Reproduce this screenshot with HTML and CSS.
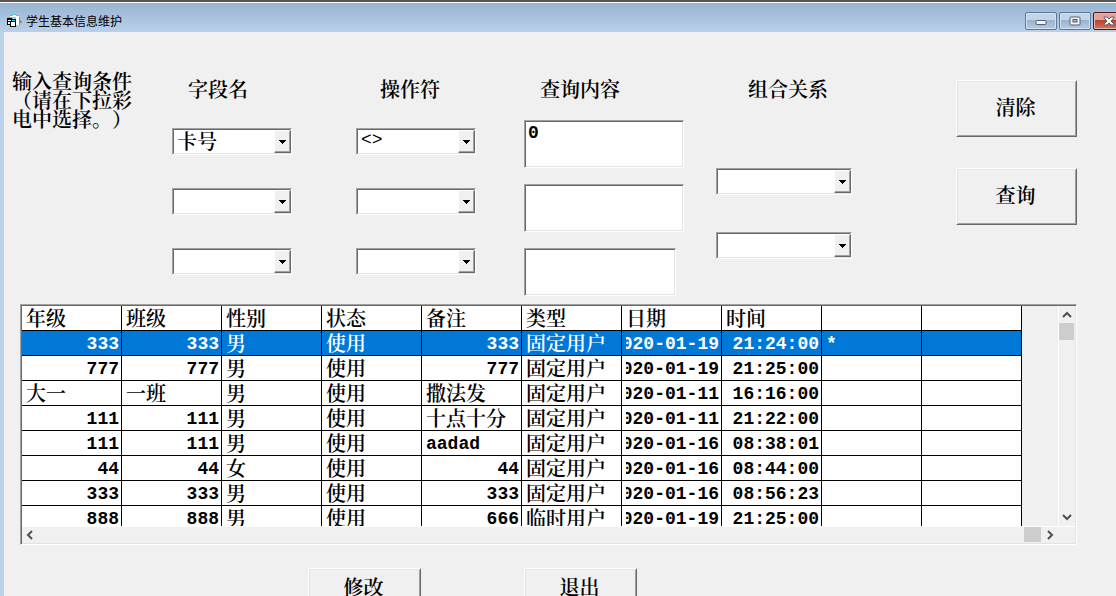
FILE: index.html
```html
<!DOCTYPE html>
<html lang="zh-CN">
<head>
<meta charset="utf-8">
<title>学生基本信息维护</title>
<link rel="stylesheet" href="styles.css">
</head>
<body>
<div class="window">
  <header class="titlebar">
    <svg class="app-icon" width="16" height="14" viewBox="0 0 16 14" aria-hidden="true" shape-rendering="crispEdges">
      <path d="M3 1h6v1h3v1h1v8H9V3H3z" fill="#fff"/>
      <path d="M3 1h3v-1h3v1h3v1H9V1H6v1H3zM1 3h4v1H1z" fill="#0fe5ee"/>
      <path d="M12 3h1v8h-1zM13 6h1v3h-1zM14 7h1v2h-1z" fill="#8b8f94"/>
      <path d="M0 4h5v1h4v8H3v-2H0z" fill="#000"/>
      <path d="M1 6h3v1H1zM1 8h2v2H1zM4 8h4v4H4z" fill="#fff"/>
      <path d="M5 6h3v1H5z" fill="#0fe5ee"/>
    </svg>
    <h1 class="title">学生基本信息维护</h1>
    <div class="caption-buttons">
      <button class="caption" type="button" aria-label="最小化">
        <svg width="12" height="10" viewBox="0 0 12 10"><rect x="1" y="4.500" width="10" height="4" rx="1" fill="#f4f4f4" stroke="#555e70"/></svg>
      </button>
      <button class="caption" type="button" aria-label="还原">
        <svg width="12" height="10" viewBox="0 0 12 10"><rect x="1" y="1" width="10" height="8" rx="1" fill="#f4f4f4" stroke="#555e70"/><rect x="4" y="3.500" width="4" height="2.500" fill="#9bb4d0" stroke="#555e70"/></svg>
      </button>
      <button class="caption close" type="button" aria-label="关闭">
        <svg width="12" height="10" viewBox="0 0 12 10"><path d="M1 1h3l2 2 2-2h3v1L8 5l3 3v1H8L6 7 4 9H1V8l3-3-3-3z" fill="#f4f4f4" stroke="#555e70"/></svg>
      </button>
    </div>
  </header>

  <main class="client">
    <form class="query">
      <p class="hint">输入查询条件（请在下拉彩电中选择。）</p>

      <section class="column fields">
        <h2 class="heading">字段名</h2>
        <div class="stack">
          <div class="combo"><select aria-label="字段名 1"><option>卡号</option></select><svg class="arrow" viewBox="0 0 15 21"><path d="M4 9h7v1h-1v1H9v1H8v1H7v-1H6v-1H5v-1H4z"/></svg></div>
          <div class="combo"><select aria-label="字段名 2"><option></option></select><svg class="arrow" viewBox="0 0 15 21"><path d="M4 9h7v1h-1v1H9v1H8v1H7v-1H6v-1H5v-1H4z"/></svg></div>
          <div class="combo"><select aria-label="字段名 3"><option></option></select><svg class="arrow" viewBox="0 0 15 21"><path d="M4 9h7v1h-1v1H9v1H8v1H7v-1H6v-1H5v-1H4z"/></svg></div>
        </div>
      </section>

      <section class="column operators">
        <h2 class="heading">操作符</h2>
        <div class="stack">
          <div class="combo"><select class="symbol" aria-label="操作符 1"><option>&lt;&gt;</option></select><svg class="arrow" viewBox="0 0 15 21"><path d="M4 9h7v1h-1v1H9v1H8v1H7v-1H6v-1H5v-1H4z"/></svg></div>
          <div class="combo"><select aria-label="操作符 2"><option></option></select><svg class="arrow" viewBox="0 0 15 21"><path d="M4 9h7v1h-1v1H9v1H8v1H7v-1H6v-1H5v-1H4z"/></svg></div>
          <div class="combo"><select aria-label="操作符 3"><option></option></select><svg class="arrow" viewBox="0 0 15 21"><path d="M4 9h7v1h-1v1H9v1H8v1H7v-1H6v-1H5v-1H4z"/></svg></div>
        </div>
      </section>

      <section class="column contents">
        <h2 class="heading">查询内容</h2>
        <div class="stack">
          <textarea class="text" aria-label="查询内容 1">0</textarea>
          <textarea class="text" aria-label="查询内容 2"></textarea>
          <textarea class="text short" aria-label="查询内容 3"></textarea>
        </div>
      </section>

      <section class="column relations">
        <h2 class="heading">组合关系</h2>
        <div class="stack">
          <div class="combo"><select aria-label="组合关系 1"><option></option></select><svg class="arrow" viewBox="0 0 15 21"><path d="M4 9h7v1h-1v1H9v1H8v1H7v-1H6v-1H5v-1H4z"/></svg></div>
          <div class="combo"><select aria-label="组合关系 2"><option></option></select><svg class="arrow" viewBox="0 0 15 21"><path d="M4 9h7v1h-1v1H9v1H8v1H7v-1H6v-1H5v-1H4z"/></svg></div>
        </div>
      </section>

      <div class="commands">
        <button class="command" type="button">清除</button>
        <button class="command" type="button">查询</button>
      </div>
    </form>

    <section class="grid">
      <div class="viewport">
        <table class="records">
          <thead>
            <tr><th>年级</th><th>班级</th><th>性别</th><th>状态</th><th>备注</th><th>类型</th><th>日期</th><th>时间</th><th></th><th></th></tr>
          </thead>
          <tbody>
            <tr class="selected"><td class="num">333</td><td class="num">333</td><td>男</td><td>使用</td><td class="num">333</td><td>固定用户</td><td class="num"><div class="clip">2020-01-19</div></td><td class="num">21:24:00</td><td class="latin">*</td><td></td></tr>
            <tr><td class="num">777</td><td class="num">777</td><td>男</td><td>使用</td><td class="num">777</td><td>固定用户</td><td class="num"><div class="clip">2020-01-19</div></td><td class="num">21:25:00</td><td></td><td></td></tr>
            <tr><td>大一</td><td>一班</td><td>男</td><td>使用</td><td>撒法发</td><td>固定用户</td><td class="num"><div class="clip">2020-01-11</div></td><td class="num">16:16:00</td><td></td><td></td></tr>
            <tr><td class="num">111</td><td class="num">111</td><td>男</td><td>使用</td><td>十点十分</td><td>固定用户</td><td class="num"><div class="clip">2020-01-11</div></td><td class="num">21:22:00</td><td></td><td></td></tr>
            <tr><td class="num">111</td><td class="num">111</td><td>男</td><td>使用</td><td class="latin">aadad</td><td>固定用户</td><td class="num"><div class="clip">2020-01-16</div></td><td class="num">08:38:01</td><td></td><td></td></tr>
            <tr><td class="num">44</td><td class="num">44</td><td>女</td><td>使用</td><td class="num">44</td><td>固定用户</td><td class="num"><div class="clip">2020-01-16</div></td><td class="num">08:44:00</td><td></td><td></td></tr>
            <tr><td class="num">333</td><td class="num">333</td><td>男</td><td>使用</td><td class="num">333</td><td>固定用户</td><td class="num"><div class="clip">2020-01-16</div></td><td class="num">08:56:23</td><td></td><td></td></tr>
            <tr><td class="num">888</td><td class="num">888</td><td>男</td><td>使用</td><td class="num">666</td><td>临时用户</td><td class="num"><div class="clip">2020-01-19</div></td><td class="num">21:25:00</td><td></td><td></td></tr>
          </tbody>
        </table>
      </div>
      <div class="vscroll">
        <svg width="16" height="17" viewBox="0 0 16 17"><path d="M4 11l4-4 4 4" class="chevron"/></svg>
        <div class="vthumb"></div>
        <svg class="end" width="16" height="17" viewBox="0 0 16 17"><path d="M4 6l4 4 4-4" class="chevron"/></svg>
      </div>
      <div class="hscroll">
        <svg width="17" height="16" viewBox="0 0 17 16"><path d="M10 4L6 8l4 4" class="chevron"/></svg>
        <div class="hthumb"></div>
        <svg width="17" height="16" viewBox="0 0 17 16"><path d="M7 4l4 4-4 4" class="chevron"/></svg>
      </div>
    </section>

    <footer class="actions">
      <button class="command" type="button">修改</button>
      <button class="command" type="button">退出</button>
    </footer>
  </main>
</div>
</body>
</html>
```
FILE: styles.css
```css
:root {
  --face: #f0f0f0;
  --light: #e3e3e3;
  --shadow: #a0a0a0;
  --dark: #696969;
  --sans: "Noto Sans CJK SC", sans-serif;
  --mono: "Liberation Mono", "Noto Sans CJK SC", monospace;
}

* { box-sizing: border-box; }

body {
  margin: 0;
  color: #000;
  font-family: "Noto Serif CJK SC", var(--sans);
  font-size: 20px;
  font-weight: 600;
  text-spacing-trim: space-all;
}

button, select, textarea { font: inherit; color: inherit; }

.window {
  height: 100vh;
  overflow: hidden;
  display: flex;
  flex-direction: column;
  border-top: 2px solid #555;
  background: #bcd2ea;
}

.titlebar {
  flex: none;
  display: flex;
  align-items: center;
  height: 30px;
  padding: 6px 0 0 7px;
  border-top: 1px solid #fff;
  background: linear-gradient(#98b4d2, #b9d0e9);
}

.app-icon { flex: none; }

.title {
  margin: 0 auto 0 3px;
  font: 12px/16px var(--sans);
}

.caption-buttons {
  display: flex;
  gap: 2px;
  margin-right: -9px;
}

.caption {
  display: grid;
  place-items: center;
  width: 32px;
  height: 18px;
  padding: 0;
  border: 1px solid #5f7694;
  border-radius: 2px;
  background: linear-gradient(#c1d4e8 45%, #98b2cf 45%, #b3cae4);
  box-shadow: inset 0 0 0 1px #d4e2f0;
}

.caption.close {
  border-color: #4b1420;
  background: linear-gradient(#e0a398 45%, #b94328 45%, #d1745c);
  box-shadow: inset 0 0 0 1px #e9b5a9;
}

.client {
  flex: 1;
  min-height: 0;
  margin-left: 4px;
  padding: 39px 0 0 8px;
  background: var(--face);
}

.query {
  display: grid;
  grid-template-columns: 160fr 184fr 168fr 192fr 240fr 160fr;
  height: 233px;
}

.hint {
  width: 122px;
  margin: 0;
  line-height: 19px;
}

.heading {
  margin: 0;
  padding: 6px 0 0 16px;
  font-size: 20px;
  font-weight: 600;
  line-height: 24px;
}

.operators .heading { padding-left: 24px; }
.relations .heading { padding-left: 32px; }

.stack {
  display: flex;
  flex-direction: column;
  gap: 33px;
  width: 120px;
  padding-top: 27px;
}

.contents .stack { gap: 16px; width: 160px; padding-top: 19px; }
.relations .stack { gap: 37px; width: 136px; padding-top: 67px; }

.combo, .text, .grid {
  border: 1px solid;
  border-color: var(--shadow) #fff #fff var(--shadow);
}

.combo {
  position: relative;
  height: 27px;
}

.combo select {
  display: block;
  width: 100%;
  height: 25px;
  padding: 0 18px 2px 3px;
  border: 1px solid;
  border-color: var(--dark) var(--light) var(--light) var(--dark);
  border-radius: 0;
  appearance: none;
  background: #fff;
  line-height: 21px;
}

.combo .symbol { font-family: var(--mono); font-size: 18px; font-weight: 400; }

.arrow {
  position: absolute;
  top: 1px;
  right: 0;
  width: 17px;
  height: 23px;
  border: 1px solid;
  border-color: #fff var(--dark) var(--dark) #fff;
  box-shadow: inset -1px -1px var(--shadow);
  background: var(--face);
  shape-rendering: crispEdges;
  pointer-events: none;
}

.text {
  display: block;
  width: 100%;
  height: 48px;
  padding: 1px 3px;
  box-shadow: inset 1px 1px var(--dark), inset -1px -1px var(--light);
  resize: none;
  background: #fff;
  font: bold 18px/22px var(--mono);
}

.text.short { width: 152px; }

.commands {
  display: flex;
  flex-direction: column;
  gap: 31px;
  padding-top: 9px;
}

.command {
  width: 121px;
  height: 57px;
  padding: 0 2px 4px 0;
  border: 1px solid;
  border-color: #fff var(--dark) var(--dark) #fff;
  box-shadow: inset 1px 1px var(--light), inset -1px -1px var(--shadow);
  background: var(--face);
}

.grid {
  display: grid;
  grid-template-columns: minmax(0, 1fr) 17px;
  margin: 0 39px 0 8px;
  box-shadow: inset 1px 1px var(--dark), inset -1px -1px var(--light);
  padding: 1px;
}

.viewport {
  height: 220px;
  padding-right: 36px;
  overflow: hidden;
}

.records {
  width: 100%;
  table-layout: fixed;
  border-spacing: 0;
  background: #fff;
}

.records th, .records td {
  height: 25px;
  padding: 0 2px 0 4px;
  border: solid #000;
  border-width: 0 1px 1px 0;
  font-weight: 600;
  line-height: 24px;
  text-align: left;
  white-space: nowrap;
}

.records .num, .records .latin {
  padding-top: 2px;
  font-family: var(--mono);
  font-size: 18px;
  font-weight: 700;
  line-height: 22px;
}

.records .num { text-align: right; }

.clip {
  display: flex;
  justify-content: flex-end;
  overflow: hidden;
}

.selected { background: #0078d7; color: #fff; }

.vscroll {
  display: flex;
  flex-direction: column;
  border-left: 1px solid #fff;
}

.vthumb { height: 17px; margin-right: 1px; background: #cdcdcd; }
.vscroll .end { margin-top: auto; }

.hscroll {
  grid-column: 1 / -1;
  display: flex;
  height: 17px;
  padding-right: 17px;
  border-top: 1px solid #fff;
}

.hthumb { width: 17px; height: 15px; margin-left: auto; background: #cdcdcd; }

.chevron { fill: none; stroke: #505050; stroke-width: 2; }

.actions {
  display: flex;
  gap: 103px;
  padding: 23px 0 0 296px;
}

.actions .command { width: 113px; height: 41px; }
```
